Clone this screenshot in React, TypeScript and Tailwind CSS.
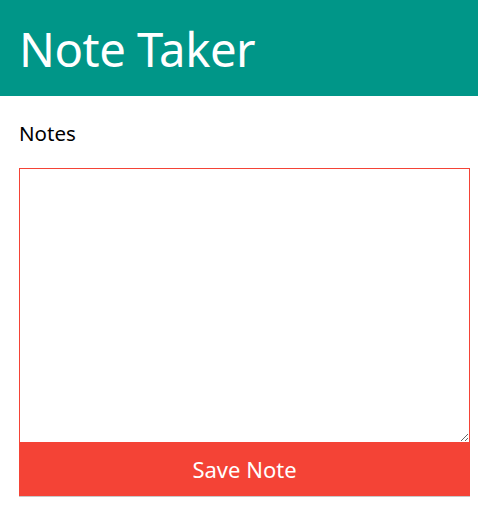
export default function App() {
  return (
    <div className="w-[478px] min-h-[505px] bg-white" style={{ fontFamily: '"Noto Sans", "Open Sans", sans-serif' }}>
      <header className="h-[96px] bg-[#009688] flex items-center pl-[19px]">
        <h1 className="text-white text-[47.3px] leading-none font-normal tracking-[-0.5px] mt-[2px]">Note Taker</h1>
      </header>
      <div className="pl-[19px] pr-[8px]">
        <label className="block mt-[22px] text-[20.5px] leading-[30px] text-black">Notes</label>
        <textarea className="block mt-[20px] w-[451px] h-[275px] border border-solid [border-color:#f44336] outline-none resize-y bg-white" />
        <button className="block w-[451px] h-[54px] bg-[#f44336] text-white text-[22px] border-b border-[#c8c8c8]">Save Note</button>
      </div>
    </div>
  );
}
